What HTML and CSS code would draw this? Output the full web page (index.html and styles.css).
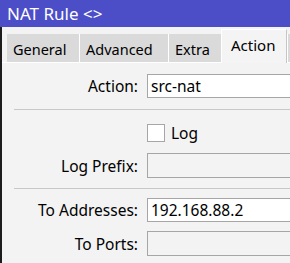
FILE: index.html
```html
<!DOCTYPE html>
<html>
<head>
<meta charset="utf-8">
<link rel="stylesheet" href="styles.css">
</head>
<body>
<div class="window">
  <div class="titlebar">NAT Rule &lt;&gt;</div>
  <div class="frame">
    <div class="tabs">
      <div class="tab">General</div>
      <div class="tab">Advanced</div>
      <div class="tab">Extra</div>
      <div class="tab active">Action</div>
      <div class="tab more"></div>
    </div>
    <div class="pane">
      <div class="row first">
        <div class="label">Action:</div>
        <div class="field">src-nat</div>
      </div>
      <div class="sep s1"></div>
      <div class="row check">
        <div class="label"></div>
        <div class="checkwrap"><span class="box"></span><span class="cl">Log</span></div>
      </div>
      <div class="row lp">
        <div class="label">Log Prefix:</div>
        <div class="field empty"></div>
      </div>
      <div class="sep s2"></div>
      <div class="row ta">
        <div class="label">To Addresses:</div>
        <div class="field">192.168.88.2</div>
      </div>
      <div class="row tp">
        <div class="label">To Ports:</div>
        <div class="field empty"></div>
      </div>
    </div>
  </div>
</div>
</body>
</html>
```
FILE: styles.css
```css
html, body {
  margin: 0;
  padding: 0;
  width: 290px;
  height: 263px;
  overflow: hidden;
  background: #f3f3f3;
  font-family: "Noto Sans", "Open Sans", sans-serif;
}
.window {
  width: 290px;
  height: 263px;
  display: flex;
  flex-direction: column;
  overflow: hidden;
}
.titlebar {
  height: 27px;
  flex: none;
  background: #4c4ec8;
  color: #ffffff;
  font-size: 17px;
  line-height: 27px;
  padding-left: 7px;
  box-sizing: border-box;
}
.frame {
  flex: 1;
  border-left: 2px solid #1c1c1c;
  background: #f3f3f3;
  min-width: 0;
}
.tabs {
  display: flex;
  align-items: flex-end;
  height: 36px;
  padding-left: 5px;
  border-bottom: 1px solid #ffffff;
  box-sizing: border-box;
}
.tab {
  height: 28px;
  background: #dadada;
  border-left: 1px solid #ffffff;
  font-size: 14.5px;
  color: #000;
  line-height: 28px;
  padding-top: 1px;
  box-sizing: border-box;
  padding-left: 6px;
  flex: none;
}
.tab:first-child { border-left: none; width: 72px; }
.tab:nth-child(2) { width: 89px; }
.tab:nth-child(3) { width: 53px; }
.tab.active {
  height: 34px;
  width: 66px;
  background: #f4f4f4;
  border-top: 1px solid #ffffff;
  border-right: 1px solid #c6c6c6;
  line-height: 30px;
  padding-top: 0;
  padding-left: 9px;
  margin-bottom: -1px;
  font-size: 15px;
}
.tab.more { flex: 1; min-width: 0; }
.pane {
  display: flex;
  flex-direction: column;
  padding-top: 11px;
}
.row {
  display: flex;
  align-items: center;
  gap: 9px;
}
.label {
  width: 136px;
  flex: none;
  text-align: right;
  font-size: 15.5px;
  color: #000;
}
.field {
  flex: 1;
  min-width: 0;
  height: 24px;
  background: #ffffff;
  border: 1px solid #a6a6a6;
  border-right: none;
  box-sizing: border-box;
  font-size: 15.5px;
  line-height: 22px;
  padding-left: 3px;
  color: #000;
  white-space: nowrap;
}
.field.empty { background: #f3f3f3; height: 25px; }
.sep {
  height: 1px;
  background: #c8c8c8;
  margin-left: 12px;
}
.s1 { margin-top: 11px; }
.check { margin-top: 14px; height: 18px; }
.checkwrap { display: flex; align-items: center; gap: 6px; }
.box {
  width: 18px;
  height: 18px;
  box-sizing: border-box;
  border: 1px solid #a6a6a6;
  background: #ffffff;
}
.cl { font-size: 15.5px; color: #000; }
.lp { margin-top: 11px; }
.s2 { margin-top: 10px; }
.ta { margin-top: 9px; }
.tp { margin-top: 9px; }
```
